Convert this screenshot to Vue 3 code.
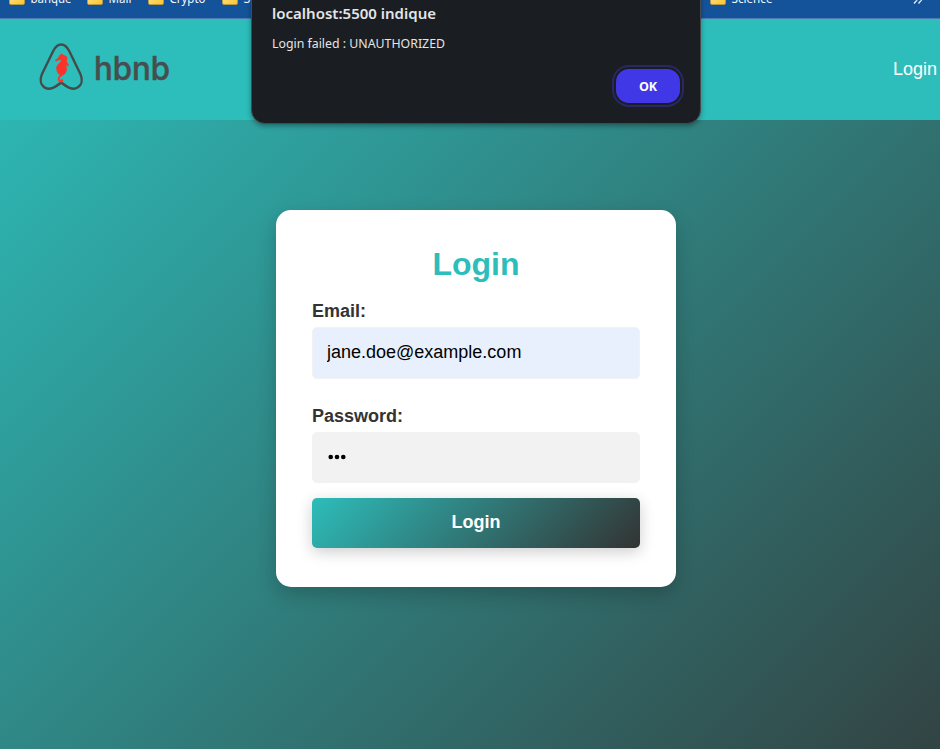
<script setup>
import { ref } from 'vue'

const bookmarks = [
  { name: 'banque', slot: 'b1', w: 41 },
  { name: 'Mail', slot: 'b2', w: 23 },
  { name: 'Crypto', slot: 'b3', w: 36 },
  { name: 'Social', slot: 'b4', w: 34 },
  { name: 'Science', slot: 'b5', w: 41 },
]
const email = ref('jane.doe@example.com')
const password = ref('•••')
</script>

<template>
  <div class="window">
    <div class="bookmarks">
      <div v-for="b in bookmarks" :key="b.name" class="bookmark" :class="b.slot">
        <svg class="folder" width="16" height="14" viewBox="0 0 16 14">
          <defs>
            <linearGradient id="fold" x1="0" y1="0" x2="1" y2="1">
              <stop offset="0" stop-color="#ffe591" />
              <stop offset="1" stop-color="#fbc52c" />
            </linearGradient>
          </defs>
          <path d="M.5 2Q.5 1 1.500 1H6l1.500 2h7q1 0 1 1v8q0 1.500-1.500 1.500H2Q.5 13.500.5 12Z" fill="url(#fold)" stroke="#c39a3c" stroke-width=".8" />
        </svg>
        <svg class="label" :width="b.w + 2" height="18">
          <text x="0.500" y="12" :textLength="b.w" lengthAdjust="spacingAndGlyphs">{{ b.name }}</text>
        </svg>
      </div>
      <svg class="more" width="10" height="8" viewBox="0 0 10 8">
        <path d="M1 0l3 3-3 3.500M5.500 0l3 3-3 3.500" fill="none" stroke="#e8f0fa" stroke-width="1.300" />
      </svg>
    </div>

    <div class="site">
      <header class="header">
        <svg class="logo" width="132" height="52" viewBox="0 0 132 52">
          <path
            d="M23.200 3.500C18.800 3.500 17 6.500 15.200 10L4 33C1.600 38.500 2.500 44 6.800 46.600C12 49.800 17.500 46 23.200 41.500C28.900 46 34.400 49.800 39.600 46.600C43.900 44 44.800 38.500 42.400 33L31.200 10C29.400 6.500 27.600 3.500 23.200 3.500Z"
            fill="none" stroke="#454b4b" stroke-width="2.400" stroke-linejoin="round"
          />
          <path
            d="M23.600 12.500L25.500 14Q28.500 14 29.300 16.500Q29.600 18.500 28.500 20.300L31 24.300L30 25.200L28 24Q29.500 27.500 28.600 30.500Q27.500 33.500 23.800 35Q21.300 36.300 21.500 38.200Q22 39.700 23 38.500Q24.800 37.800 25.200 39.500Q25 41.800 22.500 41.500Q19.800 40.500 19.700 38Q20 35.500 22 34Q19.500 33 19 30.800Q17.800 28.500 18.300 26.300Q19.300 23.500 21.800 21.500L23.600 19.600L21 19L18 20.400L16.900 18.900L20 17L21 14.800Z"
            fill="#fb3328"
          />
          <text class="wordmark" x="56" y="38.500" textLength="76" lengthAdjust="spacingAndGlyphs">hbnb</text>
        </svg>
        <a class="nav-link">Login</a>
      </header>

      <main class="main">
        <form class="card" @submit.prevent>
          <h1>Login</h1>
          <label for="email">Email:</label>
          <input id="email" v-model="email" class="email" type="text" />
          <label for="password">Password:</label>
          <div id="password" class="field">
            <svg width="20" height="8" viewBox="0 0 20 8" role="img" :aria-label="password">
              <circle cx="3.700" cy="4" r="2.300" /><circle cx="10" cy="4" r="2.300" /><circle cx="16.300" cy="4" r="2.300" />
            </svg>
          </div>
          <button class="submit" type="submit">Login</button>
        </form>
      </main>
    </div>

    <div class="alert">
      <svg class="alert-text" width="200" height="60">
        <text class="alert-title" x="0" y="19" textLength="164" lengthAdjust="spacingAndGlyphs">localhost:5500 indique</text>
        <text class="alert-msg" x="0" y="48" textLength="173" lengthAdjust="spacingAndGlyphs">Login failed : UNAUTHORIZED</text>
      </svg>
      <button class="ok">OK</button>
    </div>
  </div>
</template>

<style>
body { margin: 0; overflow: hidden; }
</style>

<style scoped>
* { box-sizing: border-box; }
.window {
  position: relative;
  width: 940px;
  height: 749px;
  overflow: hidden;
  font-family: "Liberation Sans", Arial, sans-serif;
}
.bookmarks {
  display: flex;
  height: 19px;
  background: #14539a;
  border-bottom: 1px solid #4a7ab4;
}
.bookmark { display: flex; flex: none; margin-top: -9px; height: 18px; gap: 5px; }
.folder { flex: none; }
.label { flex: none; overflow: visible; }
.label text { font: 12px "Noto Sans", "Open Sans", sans-serif; fill: #f3f7fc; }
.b1 { margin-left: 9px; }
.b2 { margin-left: 14px; }
.b3 { margin-left: 15px; }
.b4 { margin-left: 15px; }
.b5 { margin-left: 431px; }
.more { margin: -3px 0 0 auto; margin-right: 17px; flex: none; }
.site {
  display: flex;
  flex-direction: column;
  width: 952px;
  height: 950px;
  background: linear-gradient(135deg, #2dbdba, #333);
}
.header {
  display: flex;
  justify-content: space-between;
  height: 101px;
  padding: 22px 15px 0 38px;
  background: #2dbdba;
}
.logo { flex: none; overflow: visible; }
.wordmark { font: 500 33px Inter, Roboto, sans-serif; fill: #484d4e; stroke: #484d4e; stroke-width: .5px; }
.nav-link { margin-top: 17px; font-size: 18px; line-height: 22px; color: #fff; }
.main { display: flex; justify-content: center; align-items: flex-start; padding-top: 90px; }
.card {
  display: flex;
  flex-direction: column;
  width: 400px;
  height: 377px;
  padding: 36px;
  border-radius: 15px;
  background: #fff;
  box-shadow: 0 8px 20px rgba(0, 0, 0, .2);
}
h1 {
  margin: 0 0 18px;
  font-size: 32px;
  line-height: 36px;
  text-align: center;
  color: #2dbdba;
}
label { height: 27px; font-size: 18px; line-height: 22px; font-weight: bold; color: #333; }
input, .field {
  width: 100%;
  height: 51px;
  margin: 0;
  border: 1px solid #f2f2f2;
  border-radius: 5px;
  background: #f2f2f2;
}
.email { height: 52px; margin-bottom: 26px; padding: 0 14px 2px; font: 18px "Liberation Sans", Arial, sans-serif; color: #000; background: #e8f0fe; outline: none; }
.field { display: flex; align-items: center; padding: 0 0 2px 14px; }
.submit {
  height: 50px;
  margin: 15px 0 0;
  padding: 0 0 1px;
  border: 0;
  border-radius: 5px;
  font: bold 18px "Liberation Sans", Arial, sans-serif;
  color: #fff;
  background: linear-gradient(135deg, #2dbdba, #333);
  box-shadow: 0 4px 15px rgba(0, 0, 0, .2);
}
.alert {
  position: absolute;
  top: -20px;
  left: 251px;
  display: flex;
  flex-direction: column;
  width: 450px;
  height: 144px;
  padding: 20px 20px 0;
  border: 1px solid #454a50;
  border-radius: 14px;
  background: #1a1d21;
  box-shadow: 0 2px 5px rgba(0, 0, 0, .35);
}
.alert-text { flex: none; overflow: visible; margin-top: -1px; }
.alert-title { font: 600 15px "Noto Sans", "Open Sans", sans-serif; fill: #e3e5e8; }
.alert-msg { font: 12.500px "Noto Sans", "Open Sans", sans-serif; fill: #e3e5e8; }
.ok {
  align-self: flex-end;
  width: 64px;
  height: 34px;
  margin: 9px 0 0;
  padding: 0;
  border: 0;
  border-radius: 13px;
  font: bold 12.500px "Open Sans", "Noto Sans", sans-serif;
  color: #fff;
  background: #4038e6;
  box-shadow: 0 0 0 2px #1a1d21, 0 0 0 4px #292764;
}
</style>
